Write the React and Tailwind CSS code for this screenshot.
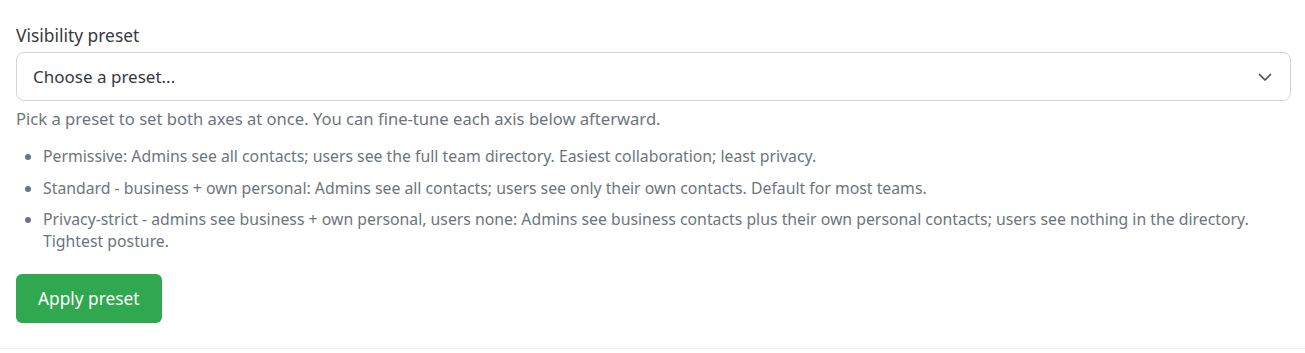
import React from "react";

export default function App() {
  const items = [
    "Permissive: Admins see all contacts; users see the full team directory. Easiest collaboration; least privacy.",
    "Standard - business + own personal: Admins see all contacts; users see only their own contacts. Default for most teams.",
    "Privacy-strict - admins see business + own personal, users none: Admins see business contacts plus their own personal contacts; users see nothing in the directory. Tightest posture.",
  ];
  return (
    <div
      className="w-full bg-white"
      style={{ fontFamily: '"Noto Sans", "Open Sans", sans-serif' }}
    >
      <div className="pl-4 pr-[14px] pt-[23px] pb-[25px] border-b border-[#f1f3f5]">
        <label className="block text-[17.4px] leading-[24px] text-[#343a40] mb-[5px]">
          Visibility preset
        </label>
        <div className="relative h-[49px] rounded-[8px] border border-[#ced4da] bg-white flex items-center pl-[16px] pr-[16px]">
          <span className="text-[17px] text-[#343a40] flex-1">Choose a preset...</span>
          <svg width="16" height="16" viewBox="0 0 16 16" fill="none" className="mr-[1px]">
            <path d="M2.5 5.5 L8 11 L13.5 5.5" stroke="#495057" strokeWidth="1.7" strokeLinecap="round" strokeLinejoin="round" />
          </svg>
        </div>
        <p className="mt-[7px] text-[16.6px] leading-[22px] text-[#6c757d]">
          Pick a preset to set both axes at once. You can fine-tune each axis below afterward.
        </p>
        <ul className="mt-[15px] pl-[27px] list-disc text-[15.8px] leading-[22px] text-[#6c757d] marker:text-[#6c757d] flex flex-col gap-[9.5px]">
          {items.map((t, i) => (
            <li key={i}>{t}</li>
          ))}
        </ul>
        <button className="mt-[22px] h-[49px] px-[22px] rounded-[6px] bg-[#2fa84f] text-white text-[17.3px]">
          Apply preset
        </button>
      </div>
    </div>
  );
}
